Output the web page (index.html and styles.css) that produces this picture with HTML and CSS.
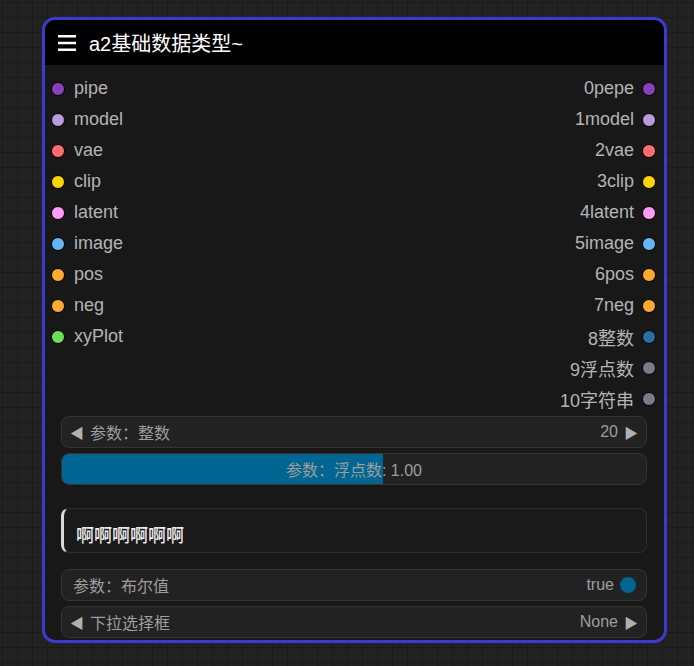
FILE: index.html
```html
<!DOCTYPE html>
<html lang="zh">
<head>
    <meta charset="UTF-8">
    <title>a2基础数据类型~</title>
    <link rel="stylesheet" href="styles.css">
</head>
<body>

    <div class="node">
        <div class="title">
            <svg class="menu" width="20" height="18" viewBox="0 0 20 18">
                <rect x="1" y="1" width="18" height="2.5" fill="#fff"/>
                <rect x="1" y="7.75" width="18" height="2.5" fill="#fff"/>
                <rect x="1" y="14.5" width="18" height="2.5" fill="#fff"/>
            </svg>
            <span>a2基础数据类型~</span>
        </div>

        <div class="slots">
            <div class="col inputs">
                <div class="slot"><i class="dot" style="background:#8a3fbe"></i>pipe</div>
                <div class="slot"><i class="dot" style="background:#b39ddb"></i>model</div>
                <div class="slot"><i class="dot" style="background:#ff6e6e"></i>vae</div>
                <div class="slot"><i class="dot" style="background:#ffd500"></i>clip</div>
                <div class="slot"><i class="dot" style="background:#ff9cf9"></i>latent</div>
                <div class="slot"><i class="dot" style="background:#64b5f6"></i>image</div>
                <div class="slot"><i class="dot" style="background:#ffa931"></i>pos</div>
                <div class="slot"><i class="dot" style="background:#ffa931"></i>neg</div>
                <div class="slot"><i class="dot" style="background:#6cdc5a"></i>xyPlot</div>
            </div>
            <div class="col outputs">
                <div class="slot">0pepe<i class="dot" style="background:#8a3fbe"></i></div>
                <div class="slot">1model<i class="dot" style="background:#b39ddb"></i></div>
                <div class="slot">2vae<i class="dot" style="background:#ff6e6e"></i></div>
                <div class="slot">3clip<i class="dot" style="background:#ffd500"></i></div>
                <div class="slot">4latent<i class="dot" style="background:#ff9cf9"></i></div>
                <div class="slot">5image<i class="dot" style="background:#64b5f6"></i></div>
                <div class="slot">6pos<i class="dot" style="background:#ffa931"></i></div>
                <div class="slot">7neg<i class="dot" style="background:#ffa931"></i></div>
                <div class="slot">8整数<i class="dot" style="background:#2a6ea0"></i></div>
                <div class="slot">9浮点数<i class="dot" style="background:#7a7a8a"></i></div>
                <div class="slot">10字符串<i class="dot" style="background:#7a7a8a"></i></div>
            </div>
        </div>

        <div class="widgets">
            <div class="widget">
                <span class="arrow">&#9664;</span>
                <span class="label">参数：整数</span>
                <span class="value">20</span>
                <span class="arrow">&#9654;</span>
            </div>
            <div class="widget slider">
                <div class="fill" style="width:55%"></div>
                <span class="slider-text">参数：浮点数: 1.00</span>
            </div>

            <div class="textbox">啊啊啊啊啊啊</div>

            <div class="widget toggle">
                <span class="label">参数：布尔值</span>
                <span class="value">true</span>
                <i class="knob"></i>
            </div>
            <div class="widget">
                <span class="arrow">&#9664;</span>
                <span class="label">下拉选择框</span>
                <span class="value">None</span>
                <span class="arrow">&#9654;</span>
            </div>
        </div>
    </div>

</body>
</html>
```

FILE: styles.css
```css
* {
    margin: 0;
    padding: 0;
    box-sizing: border-box;
}

body {
    width: 694px;
    height: 666px;
    overflow: hidden;
    padding: 17px 0 0 42px;
    font-family: "Liberation Sans", "Noto Sans CJK SC", sans-serif;
    background-color: #222;
    background-image:
        linear-gradient(to right, #1a1a1a 1px, transparent 1px),
        linear-gradient(to bottom, #1a1a1a 1px, transparent 1px);
    background-size: 15px 15px;
    background-position: 2px 2px;
}

.node {
    width: 625px;
    height: 626px;
    border: 3px solid #3b3bd0;
    border-radius: 13px;
    background: #181818;
    overflow: hidden;
    display: flex;
    flex-direction: column;
}

.node > * {
    flex: none;
}

.title {
    height: 45px;
    background: #000;
    display: flex;
    align-items: center;
    gap: 12px;
    padding-left: 12px;
    color: #fff;
    font-size: 20px;
}

.menu {
    display: block;
}

.slots {
    display: flex;
    justify-content: space-between;
    padding-top: 8px;
}

.col {
    display: flex;
    flex-direction: column;
}

.slot {
    height: 31px;
    flex: none;
    display: flex;
    align-items: center;
    font-size: 18px;
    color: #b4b4b4;
}

.inputs .slot {
    gap: 9px;
    padding-left: 6px;
}

.outputs .slot {
    justify-content: flex-end;
    gap: 8px;
    padding-right: 8px;
}

.dot {
    width: 14px;
    height: 14px;
    border-radius: 50%;
    border: 1px solid #000;
    flex: none;
}

.widgets {
    display: flex;
    flex-direction: column;
    padding: 2px 17px 0 16px;
}

.widget {
    height: 32px;
    flex: none;
    border: 1px solid #343434;
    border-radius: 8px;
    background: #222;
    display: flex;
    align-items: center;
    padding: 0 8px 0 8px;
    gap: 6px;
    font-size: 16px;
    color: #9e9e9e;
    margin-bottom: 5px;
    position: relative;
    overflow: hidden;
}

.arrow {
    font-size: 14px;
    color: #b0b0b0;
}

.label {
    flex: 1;
}

.slider {
    justify-content: center;
    padding: 0;
}

.fill {
    position: absolute;
    left: 0;
    top: 0;
    bottom: 0;
    background: #006691;
}

.slider-text {
    position: relative;
}

.textbox {
    margin-top: 18px;
    margin-bottom: 16px;
    height: 45px;
    flex: none;
    border: 1px solid #2e2e2e;
    border-left: 3px solid #d8d8d8;
    border-radius: 8px;
    background: #1a1a1a;
    color: #ececec;
    font-family: "Noto Sans CJK SC", sans-serif;
    font-size: 18px;
    font-weight: 500;
    display: flex;
    align-items: center;
    padding: 6px 0 0 12px;
}

.toggle {
    padding-left: 11px;
    padding-right: 10px;
}

.knob {
    width: 16px;
    height: 16px;
    border-radius: 50%;
    background: #006691;
}
```
